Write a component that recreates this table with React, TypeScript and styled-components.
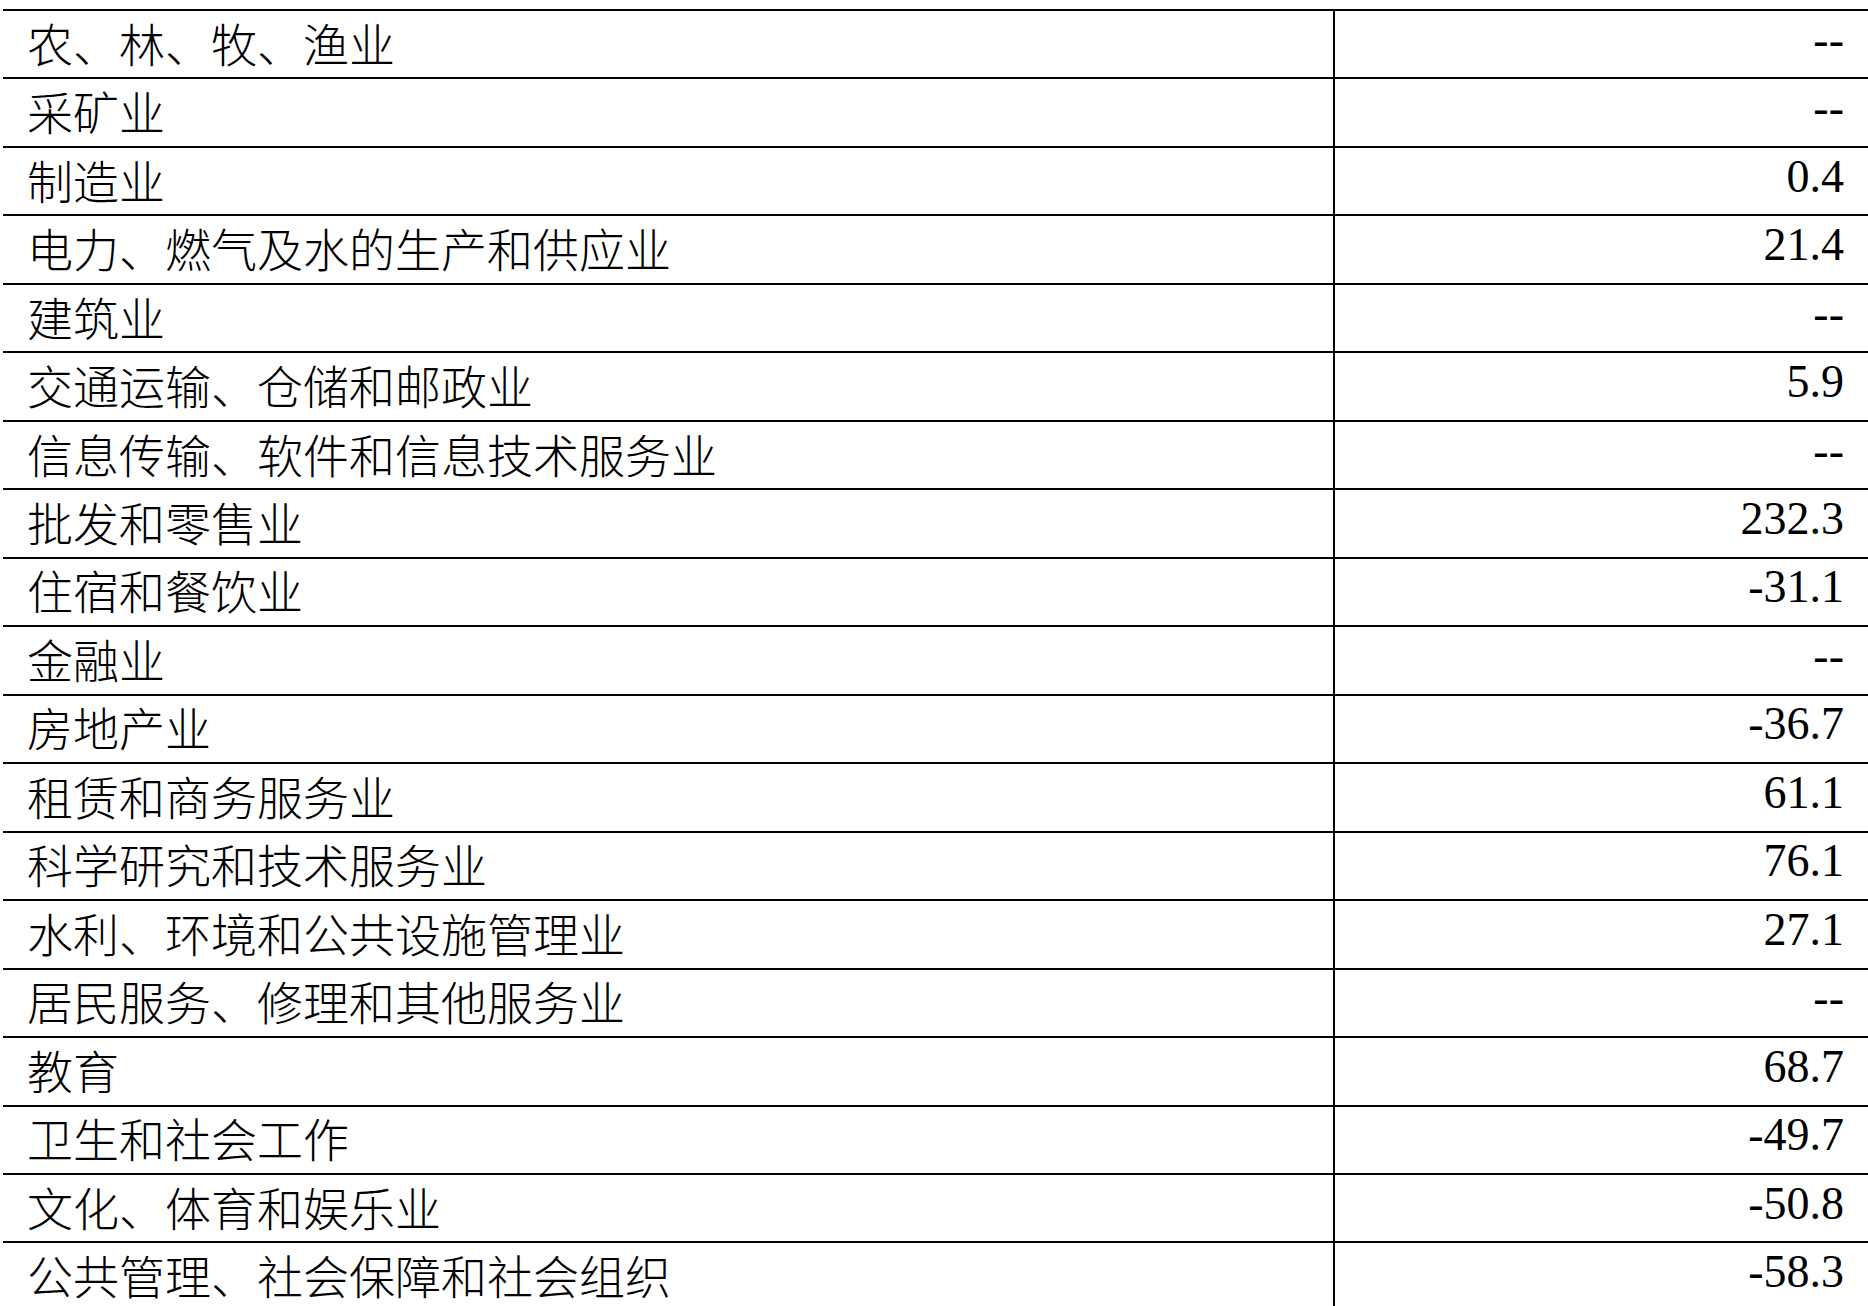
import { createGlobalStyle } from "styled-components"
import styled from "styled-components"

const GlobalStyle = createGlobalStyle`
  html, body {
    margin: 0;
    padding: 0;
    background: #fff;
    overflow: hidden;
  }
  body {
    font-family: "Liberation Serif", "Noto Sans CJK SC", serif;
    color: #000;
  }
`

const Page = styled.div({
    width: '1868px',
    height: '1306px',
    overflow: 'hidden',
    paddingTop: '9px',
    paddingLeft: '3px',
    boxSizing: 'border-box'
})

const Table = styled.div({
    width: '1867px',
    borderTop: '2px solid #000'
})

const Row = styled.div({
    display: 'grid',
    gridTemplateColumns: '1332px 1fr',
    height: '68.48px',
    boxSizing: 'border-box',
    borderBottom: '2px solid #000'
})

const LabelCell = styled.div({
    display: 'flex',
    alignItems: 'center',
    paddingLeft: '24px',
    paddingBottom: '5px',
    borderRight: '2px solid #000',
    fontFamily: '"Noto Sans CJK SC", sans-serif',
    fontWeight: 300,
    fontSize: '46px',
    lineHeight: 1,
    whiteSpace: 'nowrap'
})

const ValueCell = styled.div({
    display: 'flex',
    alignItems: 'center',
    justifyContent: 'flex-end',
    paddingRight: '26px',
    paddingBottom: '9px',
    fontFamily: '"Liberation Serif", serif',
    fontSize: '46px',
    lineHeight: 1
})

const rows: [string, string][] = [
    ['农、林、牧、渔业', '--'],
    ['采矿业', '--'],
    ['制造业', '0.4'],
    ['电力、燃气及水的生产和供应业', '21.4'],
    ['建筑业', '--'],
    ['交通运输、仓储和邮政业', '5.9'],
    ['信息传输、软件和信息技术服务业', '--'],
    ['批发和零售业', '232.3'],
    ['住宿和餐饮业', '-31.1'],
    ['金融业', '--'],
    ['房地产业', '-36.7'],
    ['租赁和商务服务业', '61.1'],
    ['科学研究和技术服务业', '76.1'],
    ['水利、环境和公共设施管理业', '27.1'],
    ['居民服务、修理和其他服务业', '--'],
    ['教育', '68.7'],
    ['卫生和社会工作', '-49.7'],
    ['文化、体育和娱乐业', '-50.8'],
    ['公共管理、社会保障和社会组织', '-58.3']
]

export default function App() {
    return (
        <>
            <GlobalStyle />
            <Page>
                <Table>
                    {rows.map(([label, value]) => (
                        <Row key={label}>
                            <LabelCell>{label}</LabelCell>
                            <ValueCell>{value}</ValueCell>
                        </Row>
                    ))}
                </Table>
            </Page>
        </>
    )
}
